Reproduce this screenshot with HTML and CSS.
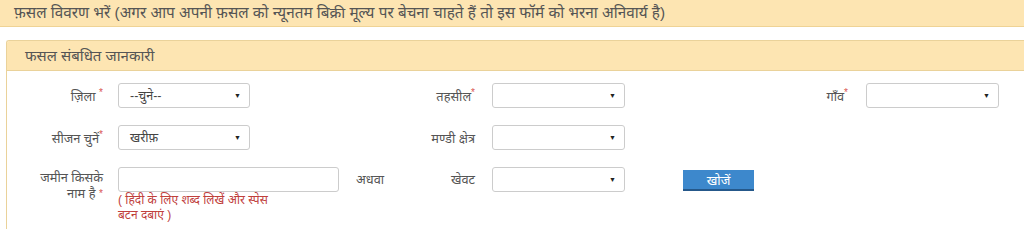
FILE: index.html
```html
<!DOCTYPE html>
<html lang="hi">
<head>
<meta charset="utf-8">
<title>फ़सल विवरण</title>
<link rel="stylesheet" href="styles.css">
</head>
<body>
<div class="notice">फ़सल विवरण भरें (अगर आप अपनी फ़सल को न्यूनतम बिक्री मूल्य पर बेचना चाहते हैं तो इस फॉर्म को भरना अनिवार्य है)</div>
<div class="panel">
  <div class="panel-head">फसल संबधित जानकारी</div>
  <div class="panel-body">
    <div class="form-grid">
      <div class="lbl">ज़िला <span class="req">*</span></div>
      <div class="sel"><span>--चुने--</span><span class="arrow">▼</span></div>
      <div class="lbl lbl-wide">तहसील<span class="req">*</span></div>
      <div class="sel"><span></span><span class="arrow">▼</span></div>
      <div class="lbl lbl-wide2">गाँव<span class="req">*</span></div>
      <div class="sel"><span></span><span class="arrow">▼</span></div>

      <div class="lbl">सीजन चुनें<span class="req">*</span></div>
      <div class="sel"><span>खरीफ़</span><span class="arrow">▼</span></div>
      <div class="lbl lbl-wide">मण्डी क्षेत्र</div>
      <div class="sel"><span></span><span class="arrow">▼</span></div>
      <div></div>
      <div></div>

      <div class="lbl lbl-multi">जमीन किसके<br>नाम है <span class="req">*</span></div>
      <div class="name-cell">
        <div class="name-field">
          <div class="txt"></div>
          <div class="hint">( हिंदी के लिए शब्द लिखें और स्पेस बटन दबाएं )</div>
        </div>
        <div class="or">अधवा</div>
        <div class="lbl lbl-inline">खेवट</div>
      </div>
      <div class="sel"><span></span><span class="arrow">▼</span></div>
      <div class="btn-cell"><button class="btn">खोजें</button></div>
      <div></div>
    </div>
  </div>
</div>
</body>
</html>
```

FILE: styles.css
```css
html, body {
  margin: 0;
  padding: 0;
  background: #ffffff;
}
body {
  font-family: "Liberation Sans", "Noto Sans", "Noto Sans Devanagari", sans-serif;
  color: #555555;
  width: 1024px;
  height: 229px;
  overflow: hidden;
}
.notice {
  background: #fde5b2;
  border-bottom: 1px solid #efd395;
  height: 26px;
  line-height: 26px;
  padding-left: 14px;
  font-size: 15.3px;
  color: #555555;
  white-space: nowrap;
}
.panel {
  box-sizing: border-box;
  margin: 13px 0 0 6px;
  border-left: 1px solid #ead29a;
  border-top: 1px solid #ead29a;
  border-radius: 3px 0 0 0;
  height: 189px;
  overflow: hidden;
}
.panel-head {
  background: #fde5b2;
  border-bottom: 1px solid #ead29a;
  height: 29px;
  line-height: 29px;
  padding-left: 18px;
  font-size: 15px;
  color: #555555;
}
.panel-body {
  padding-top: 12px;
}
.form-grid {
  display: grid;
  grid-template-columns: 111px 132px 242px 133px 241px 133px;
  grid-auto-rows: 25px;
  row-gap: 17px;
  font-size: 12.8px;
}
.lbl {
  text-align: right;
  padding-right: 15px;
  align-self: center;
  color: #555;
  white-space: nowrap;
}
.lbl-wide { padding-right: 17px; }
.lbl-wide2 { padding-right: 18px; }
.lbl-multi {
  align-self: start;
  line-height: 16px;
  padding-top: 3px;
}
.req {
  color: #d9534f;
  font-size: 10px;
  vertical-align: top;
}
.sel {
  box-sizing: border-box;
  height: 25px;
  border: 1px solid #cccccc;
  border-radius: 3px;
  background: #fff;
  display: flex;
  align-items: center;
  justify-content: space-between;
  padding: 0 8px 0 11px;
  font-size: 12.5px;
  color: #444;
}
.arrow {
  font-size: 7px;
  color: #222;
}
.name-cell {
  grid-column: 2 / span 2;
  display: flex;
  align-items: flex-start;
}
.name-field {
  width: 221px;
  flex: none;
}
.txt {
  box-sizing: border-box;
  height: 25px;
  border: 1px solid #cccccc;
  border-radius: 3px;
  background: #fff;
}
.hint {
  color: #c0403c;
  font-size: 12px;
  line-height: 15px;
  width: 160px;
  margin-top: 1px;
}
.or {
  margin-left: 17px;
  line-height: 25px;
  color: #555;
}
.lbl-inline {
  margin-left: auto;
  padding-right: 17px;
  line-height: 25px;
  align-self: flex-start;
}
.btn-cell {
  padding-left: 58px;
  padding-top: 3px;
}
.btn {
  display: block;
  width: 71px;
  height: 21px;
  background: #3d88cc;
  border: none;
  border-bottom: 2px solid #25588a;
  color: #ffffff;
  font-family: inherit;
  font-size: 13px;
  font-weight: normal;
  padding: 0;
  cursor: pointer;
}
```
